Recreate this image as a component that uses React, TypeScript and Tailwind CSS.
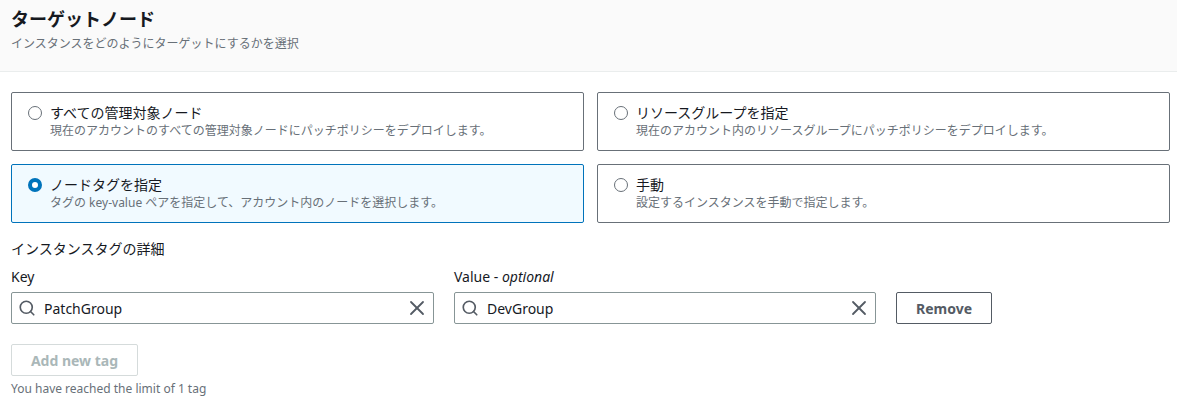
import { Search, X } from "lucide-react";

type Option = {
  id: string;
  title: string;
  description: string;
};

const options: Option[] = [
  {
    id: "all",
    title: "すべての管理対象ノード",
    description: "現在のアカウントのすべての管理対象ノードにパッチポリシーをデプロイします。",
  },
  {
    id: "rg",
    title: "リソースグループを指定",
    description: "現在のアカウント内のリソースグループにパッチポリシーをデプロイします。",
  },
  {
    id: "tags",
    title: "ノードタグを指定",
    description: "タグの key-value ペアを指定して、アカウント内のノードを選択します。",
  },
  {
    id: "manual",
    title: "手動",
    description: "設定するインスタンスを手動で指定します。",
  },
];

const font = {
  fontFamily: '"Noto Sans", "Noto Sans CJK JP", sans-serif',
};

function TagInput({ value }: { value: string }) {
  return (
    <div className="flex h-[32px] items-center rounded-[2px] border border-[#879596] bg-white pl-[6px] pr-[4px]">
      <Search size={18} strokeWidth={2.2} className="text-[#545b64]" />
      <span className="ml-[8px] flex-1 text-[14px] text-[#16191f]">{value}</span>
      <X size={24} strokeWidth={1.8} className="text-[#545b64]" />
    </div>
  );
}

export default function App() {
  const selected = "tags";

  return (
    <div className="w-[1177px] h-[399px] bg-white overflow-hidden" style={font}>
      <div className="h-[72px] border-b border-[#eaeded] bg-[#fafafa] pl-[11px] pt-[6px]">
        <h2 className="text-[18px] font-bold leading-[26px] text-[#16191f]">ターゲットノード</h2>
        <p className="mt-[4px] text-[12px] leading-[16px] text-[#687078]">
          インスタンスをどのようにターゲットにするかを選択
        </p>
      </div>

      <div className="pl-[11px] pr-[7px] pt-[20px]">
        <div className="grid grid-cols-2 gap-x-[13px] gap-y-[13px]">
          {options.map((o) => {
            const isActive = o.id === selected;
            return (
              <div
                key={o.id}
                className={`flex h-[59px] items-start rounded-[2px] border pl-[16px] pt-[10px] ${
                  isActive ? "border-[#0073bb] bg-[#f1faff]" : "border-[#687078] bg-white"
                }`}
              >
                <span
                  className={`mt-[3px] h-[14px] w-[14px] shrink-0 rounded-full ${
                    isActive ? "border-[4px] border-[#0073bb] bg-white" : "border-[1.5px] border-[#687078] bg-white"
                  }`}
                />
                <div className="ml-[8px]">
                  <div className="text-[14px] leading-[20px] text-[#16191f]">{o.title}</div>
                  <div className="text-[12px] leading-[16px] text-[#687078]">{o.description}</div>
                </div>
              </div>
            );
          })}
        </div>

        <div className="mt-[16px] text-[14px] leading-[20px] text-[#16191f]">インスタンスタグの詳細</div>

        <div className="mt-[8px] flex items-end">
          <div className="w-[423px]">
            <div className="mb-[5px] text-[14px] leading-[20px] text-[#16191f]">Key</div>
            <TagInput value="PatchGroup" />
          </div>
          <div className="ml-[20px] w-[422px]">
            <div className="mb-[5px] text-[14px] leading-[20px] text-[#16191f]">
              Value - <i>optional</i>
            </div>
            <TagInput value="DevGroup" />
          </div>
          <button className="ml-[20px] h-[32px] w-[96px] rounded-[2px] border border-[#545b64] bg-white text-[14px] font-bold text-[#545b64]">
            Remove
          </button>
        </div>

        <button className="mt-[20px] h-[32px] w-[127px] rounded-[2px] border border-[#d5dbdb] bg-white text-[14px] font-bold text-[#aab7b8]">
          Add new tag
        </button>
        <div className="mt-[5px] text-[12px] leading-[16px] text-[#687078]">You have reached the limit of 1 tag</div>
      </div>
    </div>
  );
}
